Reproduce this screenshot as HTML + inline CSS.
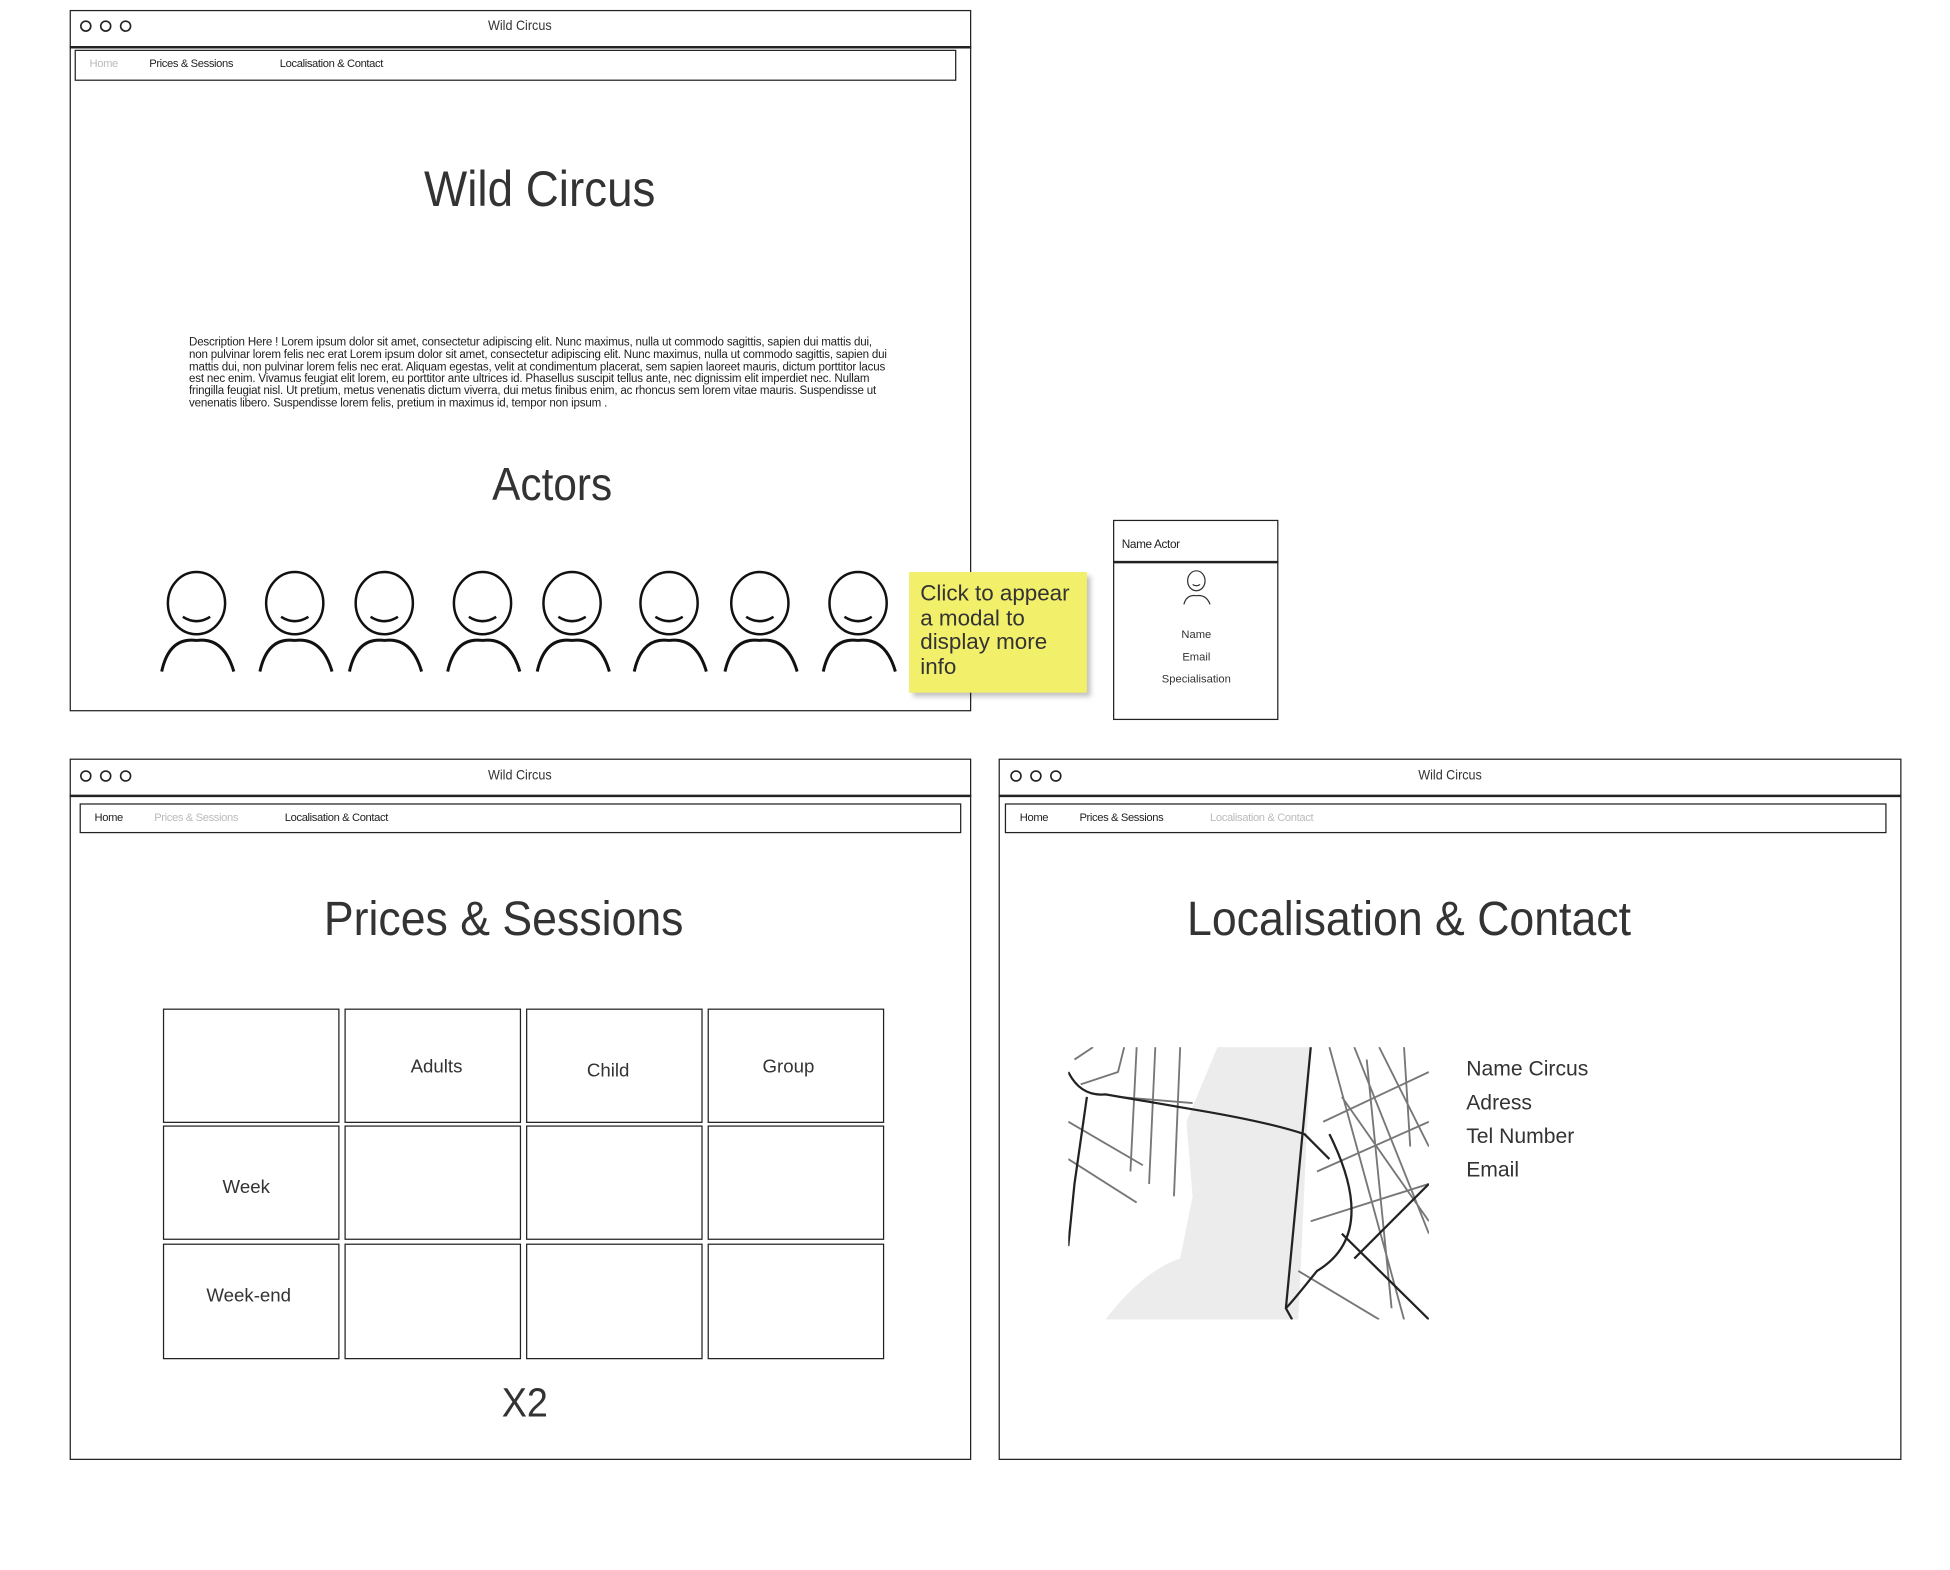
<!DOCTYPE html>
<html><head><meta charset="utf-8"><style>
html,body{margin:0;padding:0;background:#fff;width:1950px;height:1570px;overflow:hidden}
#s{position:absolute;left:0;top:0;width:1568px;height:1262px;transform:scale(1.2436);transform-origin:0 0;font-family:"Liberation Sans",sans-serif;color:#222}
.a{position:absolute}
.fr{position:absolute;border:1.6px solid #222;box-sizing:border-box;background:#fff}
.hd{font-family:"Liberation Sans Narrow","Liberation Sans",sans-serif;color:#333;position:absolute;transform:translate(-50%,-50%) scaleX(0.92);white-space:nowrap}
.sm{font-size:10px;position:absolute;transform:translateY(-50%);white-space:nowrap;letter-spacing:-0.3px}
.cell{position:absolute;border:1.5px solid #222;box-sizing:border-box}
.lbl{position:absolute;transform:translate(-50%,-50%);font-size:15px;color:#333;font-family:"Liberation Sans",sans-serif}
</style></head><body><div id="s">

<!-- Frame 1 -->
<div class="fr" style="left:56px;top:8px;width:725px;height:564px"></div>
<div class="a" style="left:56px;top:37px;width:725px;height:1.6px;background:#222"></div>
<svg class="a" style="left:60px;top:14px" width="50" height="14"><circle cx="9" cy="7" r="4" fill="none" stroke="#222" stroke-width="1.3"/><circle cx="25" cy="7" r="4" fill="none" stroke="#222" stroke-width="1.3"/><circle cx="41" cy="7" r="4" fill="none" stroke="#222" stroke-width="1.3"/></svg>
<div class="hd" style="left:418px;top:21px;font-size:11px;font-family:'Liberation Sans',sans-serif">Wild Circus</div>
<div class="fr" style="left:60px;top:40px;width:709px;height:25px;border-width:1.6px"></div>
<div class="sm" style="left:72px;top:51px;color:#bbb;font-size:9px">Home</div>
<div class="sm" style="left:120px;top:51px;font-size:9px">Prices &amp; Sessions</div>
<div class="sm" style="left:225px;top:51px;font-size:9px">Localisation &amp; Contact</div>
<div class="hd" style="left:434px;top:153px;font-size:40px">Wild Circus</div>
<div class="a" style="left:152px;top:271px;width:565px;font-size:9.3px;line-height:9.8px;letter-spacing:-0.15px">Description Here ! Lorem ipsum dolor sit amet, consectetur adipiscing elit. Nunc maximus, nulla ut commodo sagittis, sapien dui mattis dui, non pulvinar lorem felis nec erat Lorem ipsum dolor sit amet, consectetur adipiscing elit. Nunc maximus, nulla ut commodo sagittis, sapien dui mattis dui, non pulvinar lorem felis nec erat. Aliquam egestas, velit at condimentum placerat, sem sapien laoreet mauris, dictum porttitor lacus est nec enim. Vivamus feugiat elit lorem, eu porttitor ante ultrices id. Phasellus suscipit tellus ante, nec dignissim elit imperdiet nec. Nullam fringilla feugiat nisl. Ut pretium, metus venenatis dictum viverra, dui metus finibus enim, ac rhoncus sem lorem vitae mauris. Suspendisse ut venenatis libero. Suspendisse lorem felis, pretium in maximus id, tempor non ipsum .</div>
<div class="hd" style="left:444px;top:390px;font-size:37px">Actors</div>
<svg class="a" style="left:0;top:0" width="780" height="572" fill="none" stroke="#111" stroke-width="2">
<defs><g id="p"><ellipse cx="0" cy="485" rx="23" ry="25"/><path d="M-11 496 Q0 503 11 496"/><path d="M-28 540 Q-22 512 0 515 Q22 512 30 540" stroke-width="2.4"/></g></defs>
<use href="#p" x="158"/><use href="#p" x="237"/><use href="#p" x="309"/><use href="#p" x="388"/><use href="#p" x="460"/><use href="#p" x="538"/><use href="#p" x="611"/><use href="#p" x="690"/>
</svg>

<!-- sticky -->
<div class="a" style="left:731px;top:460px;width:143px;height:97px;background:#f2ef6b;box-shadow:3px 3px 4px rgba(0,0,0,.25)"></div>
<div class="a" style="left:740px;top:468px;width:135px;font-size:18px;line-height:19.5px;color:#333;font-family:'Liberation Sans Narrow','Liberation Sans',sans-serif">Click to appear a modal to display more info</div>

<!-- modal -->
<div class="fr" style="left:895px;top:418px;width:133px;height:161px"></div>
<div class="a" style="left:895px;top:451px;width:133px;height:1.6px;background:#222"></div>
<div class="sm" style="left:902px;top:438px;font-size:9.5px">Name Actor</div>
<svg class="a" style="left:950px;top:458px" width="26" height="30" fill="none" stroke="#333" stroke-width="1"><ellipse cx="12" cy="9" rx="7" ry="8"/><path d="M9 12 Q12 14 15 12"/><path d="M2 28 Q4 20 12 21 Q20 20 23 28"/></svg>
<div class="lbl" style="left:962px;top:510px;font-size:9px">Name</div>
<div class="lbl" style="left:962px;top:528px;font-size:9px">Email</div>
<div class="lbl" style="left:962px;top:546px;font-size:9px">Specialisation</div>

<!-- Frame 2 -->
<div class="fr" style="left:56px;top:610px;width:725px;height:564px"></div>
<div class="a" style="left:56px;top:639px;width:725px;height:1.6px;background:#222"></div>
<svg class="a" style="left:60px;top:617px" width="50" height="14"><circle cx="9" cy="7" r="4" fill="none" stroke="#222" stroke-width="1.3"/><circle cx="25" cy="7" r="4" fill="none" stroke="#222" stroke-width="1.3"/><circle cx="41" cy="7" r="4" fill="none" stroke="#222" stroke-width="1.3"/></svg>
<div class="hd" style="left:418px;top:624px;font-size:11px;font-family:'Liberation Sans',sans-serif">Wild Circus</div>
<div class="fr" style="left:64px;top:646px;width:709px;height:24px"></div>
<div class="sm" style="left:76px;top:657px;font-size:9px">Home</div>
<div class="sm" style="left:124px;top:657px;color:#bbb;font-size:9px">Prices &amp; Sessions</div>
<div class="sm" style="left:229px;top:657px;font-size:9px">Localisation &amp; Contact</div>
<div class="hd" style="left:405px;top:740px;font-size:39px">Prices &amp; Sessions</div>
<div class="cell" style="left:131px;top:811px;width:142px;height:92px"></div>
<div class="cell" style="left:277px;top:811px;width:142px;height:92px"></div>
<div class="cell" style="left:423px;top:811px;width:142px;height:92px"></div>
<div class="cell" style="left:569px;top:811px;width:142px;height:92px"></div>
<div class="cell" style="left:131px;top:905px;width:142px;height:92px"></div>
<div class="cell" style="left:277px;top:905px;width:142px;height:92px"></div>
<div class="cell" style="left:423px;top:905px;width:142px;height:92px"></div>
<div class="cell" style="left:569px;top:905px;width:142px;height:92px"></div>
<div class="cell" style="left:131px;top:1000px;width:142px;height:93px"></div>
<div class="cell" style="left:277px;top:1000px;width:142px;height:93px"></div>
<div class="cell" style="left:423px;top:1000px;width:142px;height:93px"></div>
<div class="cell" style="left:569px;top:1000px;width:142px;height:93px"></div>
<div class="lbl" style="left:351px;top:858px">Adults</div>
<div class="lbl" style="left:489px;top:861px">Child</div>
<div class="lbl" style="left:634px;top:858px">Group</div>
<div class="lbl" style="left:198px;top:955px">Week</div>
<div class="lbl" style="left:200px;top:1042px">Week-end</div>
<div class="hd" style="left:422px;top:1128px;font-size:33px">X2</div>

<!-- Frame 3 -->
<div class="fr" style="left:803px;top:610px;width:726px;height:564px"></div>
<div class="a" style="left:803px;top:639px;width:726px;height:1.6px;background:#222"></div>
<svg class="a" style="left:808px;top:617px" width="50" height="14"><circle cx="9" cy="7" r="4" fill="none" stroke="#222" stroke-width="1.3"/><circle cx="25" cy="7" r="4" fill="none" stroke="#222" stroke-width="1.3"/><circle cx="41" cy="7" r="4" fill="none" stroke="#222" stroke-width="1.3"/></svg>
<div class="hd" style="left:1166px;top:624px;font-size:11px;font-family:'Liberation Sans',sans-serif">Wild Circus</div>
<div class="fr" style="left:808px;top:646px;width:709px;height:24px"></div>
<div class="sm" style="left:820px;top:657px;font-size:9px">Home</div>
<div class="sm" style="left:868px;top:657px;font-size:9px">Prices &amp; Sessions</div>
<div class="sm" style="left:973px;top:657px;color:#bbb;font-size:9px">Localisation &amp; Contact</div>
<div class="hd" style="left:1133px;top:740px;font-size:39px">Localisation &amp; Contact</div>
<svg class="a" style="left:859px;top:842px" width="290" height="219" fill="none">
<rect width="290" height="219" fill="#fff"/>
<path d="M120 0 L195 0 L185 219 L30 219 Q60 180 90 170 L100 120 L95 60 Z" fill="#ececec"/>
<g stroke="#777" stroke-width="1.5">
<path d="M5 10 L20 0 M10 30 L40 20 L45 0 M55 0 L50 100 M70 0 L65 110 M90 0 L85 120 M0 60 L60 95 M0 90 L55 125 M40 40 L100 45"/>
<path d="M210 0 L270 219 M230 0 L290 150 M250 0 L290 80 M205 60 L290 20 M200 100 L290 60 M195 140 L290 110 M185 180 L250 219 M220 40 L290 140 M240 10 L260 210 M270 0 L275 80"/>
</g>
<g stroke="#222" stroke-width="1.8">
<path d="M0 20 Q10 40 30 38 L100 50 Q160 60 190 70 L210 90"/>
<path d="M195 0 L175 210 L180 219"/>
<path d="M15 40 L5 110 L0 160"/>
<path d="M210 70 Q250 150 200 180 Q180 205 175 210"/>
<path d="M220 150 L290 219 M230 170 L290 110"/>
</g>
</svg>
<div class="a" style="left:1179px;top:846px;font-size:17px;line-height:27px;color:#333;font-family:'Liberation Sans Narrow','Liberation Sans',sans-serif">Name Circus<br>Adress<br>Tel Number<br>Email</div>

</div></body></html>
